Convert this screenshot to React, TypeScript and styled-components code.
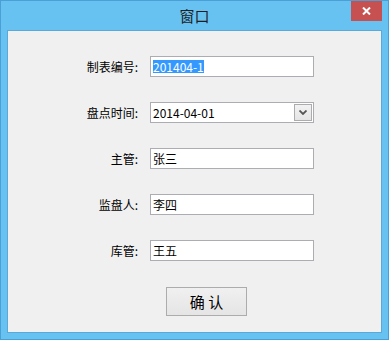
import React from 'react';
import styled, { createGlobalStyle } from 'styled-components';

const GlobalStyle = createGlobalStyle`
  html, body {
    margin: 0;
    padding: 0;
    background: #ffffff;
  }
  body {
    font-family: "Noto Sans CJK SC", "Liberation Sans", sans-serif;
  }
`;

const Window = styled.div`
  box-sizing: border-box;
  width: 389px;
  height: 340px;
  border: 1px solid #4a9fd6;
  background: #67c1f1;
  display: flex;
  flex-direction: column;
  padding: 0 6px 6px 6px;
`;

const TitleBar = styled.div`
  height: 29px;
  display: grid;
  grid-template-columns: 1fr auto 1fr;
  align-items: start;
`;

const Title = styled.div`
  grid-column: 2;
  font-size: 15px;
  line-height: 15px;
  padding-top: 7px;
  color: #1e1e1e;
`;

const CloseButton = styled.div`
  grid-column: 3;
  justify-self: end;
  width: 31px;
  height: 20px;
  background: #c75050;
  display: flex;
  align-items: center;
  justify-content: center;
`;

const Client = styled.div`
  flex: 1;
  box-sizing: border-box;
  border: 1px solid #5aa9d8;
  background: #f0f0f0;
  display: flex;
  flex-direction: column;
  align-items: flex-start;
  padding: 25px 0 0 0;
`;

const Form = styled.div`
  display: grid;
  grid-template-columns: 80px 164px;
  column-gap: 12px;
  row-gap: 25px;
  margin-left: 50px;
`;

const Label = styled.div`
  font-size: 12px;
  line-height: 21px;
  height: 21px;
  text-align: right;
  color: #000;
`;

const Field = styled.div<{ $combo?: boolean }>`
  box-sizing: border-box;
  height: 21px;
  border: 1px solid #abadb3;
  background: #fff;
  display: flex;
  align-items: center;
  padding-left: 2px;
  font-size: 12px;
  color: #000;
  justify-content: space-between;
`;

const Selected = styled.span`
  background: #3399ff;
  color: #fff;
  line-height: 13px;
`;

const Value = styled.span`
  line-height: 13px;
`;

const DropButton = styled.div`
  box-sizing: border-box;
  width: 18px;
  height: 17px;
  margin-right: 1px;
  border: 1px solid #acacac;
  background: linear-gradient(#f2f2f2, #e5e5e5);
  display: flex;
  align-items: center;
  justify-content: center;
`;

const ButtonRow = styled.div`
  display: flex;
  margin: 26px 0 0 158px;
`;

const ConfirmButton = styled.div`
  box-sizing: border-box;
  width: 81px;
  height: 29px;
  border: 1px solid #acacac;
  background: linear-gradient(#f0f0f0, #e5e5e5);
  display: flex;
  align-items: center;
  justify-content: center;
  font-size: 15px;
  color: #000;
  padding-bottom: 1px;
`;

const rows: { label: string; value: string; selected?: boolean; combo?: boolean }[] = [
  { label: '制表编号:', value: '201404-1', selected: true },
  { label: '盘点时间:', value: '2014-04-01', combo: true },
  { label: '主管:', value: '张三' },
  { label: '监盘人:', value: '李四' },
  { label: '库管:', value: '王五' },
];

export default function App() {
  return (
    <>
      <GlobalStyle />
      <Window>
        <TitleBar>
          <Title>窗口</Title>
          <CloseButton>
            <svg width="9" height="8" viewBox="0 0 9 8">
              <path d="M1 0.5 L8 7.5 M8 0.5 L1 7.5" stroke="#fff" strokeWidth="2" />
            </svg>
          </CloseButton>
        </TitleBar>
        <Client>
          <Form>
            {rows.map((r) => (
              <React.Fragment key={r.label}>
                <Label>{r.label}</Label>
                <Field $combo={r.combo}>
                  {r.selected ? <Selected>{r.value}</Selected> : <Value>{r.value}</Value>}
                  {r.combo && (
                    <DropButton>
                      <svg width="8" height="5" viewBox="0 0 8 5">
                        <path d="M0.5 0.5 L4 4 L7.5 0.5" stroke="#555" strokeWidth="1.8" fill="none" />
                      </svg>
                    </DropButton>
                  )}
                </Field>
              </React.Fragment>
            ))}
          </Form>
          <ButtonRow>
            <ConfirmButton>确 认</ConfirmButton>
          </ButtonRow>
        </Client>
      </Window>
    </>
  );
}
